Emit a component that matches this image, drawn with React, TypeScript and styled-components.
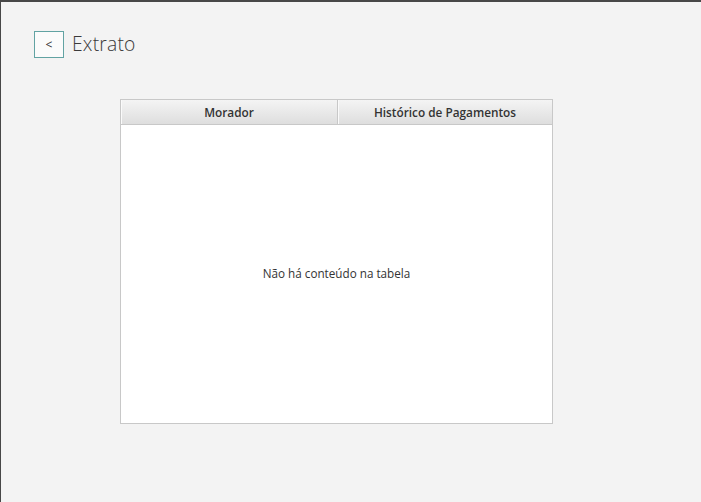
import React from "react";
import styled, { createGlobalStyle } from "styled-components";

const Global = createGlobalStyle`
  html, body { margin: 0; padding: 0; background: #f3f3f3; }
  body { font-family: "Open Sans", "Noto Sans", "Liberation Sans", sans-serif; }
`;

const Window = styled.div`
  width: 701px;
  height: 502px;
  box-sizing: border-box;
  background: #f3f3f3;
  border-top: 2px solid #474747;
  border-left: 1px solid #474747;
  display: flex;
  flex-direction: column;
`;

const Header = styled.div`
  display: flex;
  align-items: center;
  gap: 8px;
  height: 27px;
  margin: 29px 0 0 33px;
`;

const BackButton = styled.button`
  width: 30px;
  height: 27px;
  box-sizing: border-box;
  border: 1px solid #62a3a3;
  background: #fbfbfb;
  padding: 0;
  display: flex;
  align-items: center;
  justify-content: center;
  font-family: "Open Sans", sans-serif;
  font-size: 12px;
  color: #333;
  cursor: pointer;
`;

const Title = styled.h1`
  margin: 0 0 2px 0;
  line-height: 24px;
  font-family: "Open Sans", "Noto Sans", sans-serif;
  font-weight: 300;
  font-size: 19.3px;
  color: #3a3a3a;
  letter-spacing: 0.2px;
`;

const TableWrap = styled.div`
  margin: 41px 0 0 119px;
  width: 433px;
  height: 325px;
  box-sizing: border-box;
  border: 1px solid #c8c8c8;
  background: #fff;
  display: flex;
  flex-direction: column;
`;

const HeaderRow = styled.div`
  display: grid;
  grid-template-columns: 217px 1fr;
  height: 24px;
  border-bottom: 1px solid #c8c8c8;
  background: linear-gradient(#f4f4f4, #dedede);
`;

const HeaderCell = styled.div<{ $divider?: boolean }>`
  display: flex;
  align-items: center;
  justify-content: center;
  font-family: "Open Sans", "Noto Sans", sans-serif;
  font-weight: 600;
  font-size: 11.8px;
  color: #333;
  border-right: ${(p) => (p.$divider ? "1px solid #c8c8c8" : "none")};
  box-shadow: inset 1px 0 0 #fafafa;
`;

const Body = styled.div`
  flex: 1;
  display: flex;
  align-items: center;
  justify-content: center;
  font-family: "Open Sans", "Noto Sans", sans-serif;
  font-size: 11.7px;
  color: #333;
  padding-bottom: 2px;
`;

export default function App() {
  return (
    <>
      <Global />
      <Window>
        <Header>
          <BackButton>&lt;</BackButton>
          <Title>Extrato</Title>
        </Header>
        <TableWrap>
          <HeaderRow>
            <HeaderCell $divider>Morador</HeaderCell>
            <HeaderCell>Histórico de Pagamentos</HeaderCell>
          </HeaderRow>
          <Body>Não há conteúdo na tabela</Body>
        </TableWrap>
      </Window>
    </>
  );
}
